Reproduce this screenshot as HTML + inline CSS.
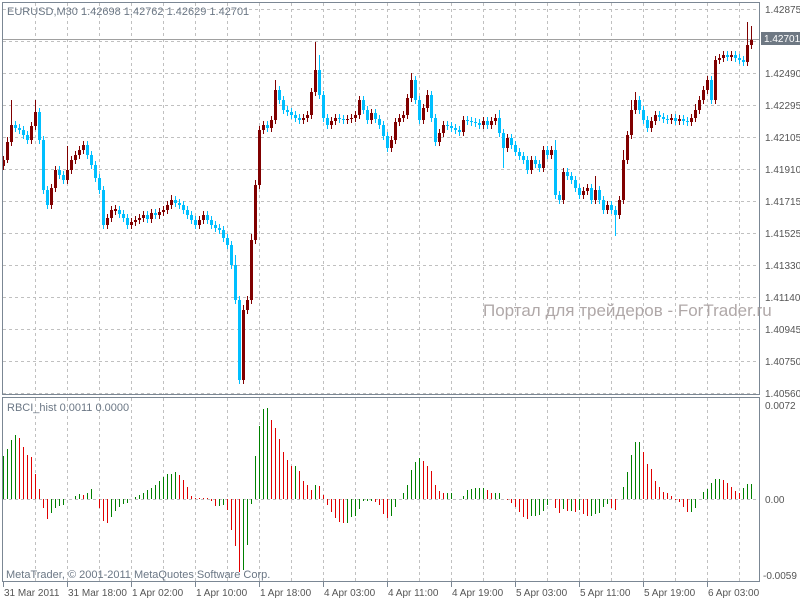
<!DOCTYPE html>
<html><head><meta charset="utf-8"><style>
html,body{margin:0;padding:0;background:#fff;width:800px;height:600px;overflow:hidden}
svg{display:block;font-family:"Liberation Sans",Tahoma,sans-serif;font-size:10px}
</style></head><body>
<svg width="800" height="600" xmlns="http://www.w3.org/2000/svg">
<g stroke="#c0c0c0" stroke-dasharray="3,3" stroke-width="1">
<path d="M35.5 3V394M67.5 3V394M99.5 3V394M131.5 3V394M163.5 3V394M195.5 3V394M227.5 3V394M259.5 3V394M291.5 3V394M323.5 3V394M355.5 3V394M387.5 3V394M419.5 3V394M451.5 3V394M483.5 3V394M515.5 3V394M547.5 3V394M579.5 3V394M611.5 3V394M643.5 3V394M675.5 3V394M707.5 3V394M739.5 3V394"/>
<path d="M35.5 398V581M67.5 398V581M99.5 398V581M131.5 398V581M163.5 398V581M195.5 398V581M227.5 398V581M259.5 398V581M291.5 398V581M323.5 398V581M355.5 398V581M387.5 398V581M419.5 398V581M451.5 398V581M483.5 398V581M515.5 398V581M547.5 398V581M579.5 398V581M611.5 398V581M643.5 398V581M675.5 398V581M707.5 398V581M739.5 398V581"/>
<path d="M3 9.5H759M3 41.5H759M3 73.5H759M3 105.5H759M3 137.5H759M3 169.5H759M3 201.5H759M3 233.5H759M3 265.5H759M3 297.5H759M3 329.5H759M3 361.5H759M3 393.5H759M3 499.5H759"/>
</g>
<line x1="2" y1="39.5" x2="760" y2="39.5" stroke="#a0a0a0"/>
<!-- wicks -->
<g stroke-width="1">
<path stroke="#800000" d="M3.5 156V170M7.5 137V163M11.5 100V146M31.5 122V144M35.5 100V130M51.5 184V209M55.5 166V192M67.5 146V184M71.5 156V174M75.5 151V164M79.5 146V159M83.5 141V154M107.5 214V229M111.5 206V222M115.5 205V215M131.5 218V229M135.5 216V226M139.5 214V224M143.5 211V222M151.5 209V223M159.5 208V219M163.5 206V216M167.5 201V214M171.5 195V209M199.5 216V229M203.5 211V224M243.5 305V384M247.5 296V314M251.5 234V304M255.5 180V244M259.5 126V189M263.5 121V134M271.5 116V132M275.5 80V124M303.5 114V124M307.5 111V122M311.5 88V119M315.5 42V96M331.5 117V129M335.5 114V125M347.5 115V124M351.5 114V123M355.5 111V122M359.5 96V119M371.5 109V124M391.5 136V152M395.5 118V144M399.5 114V126M403.5 111V122M407.5 94V119M411.5 73V102M423.5 104V124M427.5 90V112M439.5 129V146M443.5 121V137M463.5 116V136M483.5 117V129M491.5 117V129M495.5 114V125M507.5 134V152M531.5 156V174M543.5 146V172M551.5 146V159M563.5 168V204M583.5 187V199M587.5 184V195M595.5 176V204M607.5 201V214M619.5 196V219M623.5 150V204M627.5 131V164M631.5 100V139M635.5 92V114M651.5 117V132M655.5 111V125M671.5 114V124M679.5 115V125M691.5 114V126M695.5 104V122M699.5 96V114M703.5 86V104M707.5 76V94M715.5 56V104M719.5 54V64M723.5 51V62M731.5 51V61M747.5 22V66M751.5 26V49"/>
<path stroke="#00bfff" d="M15.5 121V132M19.5 124V134M23.5 126V139M27.5 131V144M39.5 108V144M43.5 136V194M47.5 186V209M59.5 166V179M63.5 171V184M87.5 141V159M91.5 151V169M95.5 161V182M99.5 174V194M103.5 186V229M119.5 206V218M123.5 210V222M127.5 214V229M147.5 211V223M155.5 209V219M175.5 196V207M179.5 199V209M183.5 201V214M187.5 206V219M191.5 211V224M195.5 216V229M207.5 211V224M211.5 216V229M215.5 221V232M219.5 224V234M223.5 226V242M227.5 234V249M231.5 241V269M235.5 255V304M239.5 296V384M267.5 121V132M279.5 86V104M283.5 96V114M287.5 106V116M291.5 108V119M295.5 111V122M299.5 114V124M319.5 55V99M323.5 91V122M327.5 114V129M339.5 114V123M343.5 115V124M363.5 96V114M367.5 106V124M375.5 109V123M379.5 115V129M383.5 121V140M387.5 132V152M415.5 76V104M419.5 96V124M431.5 91V122M435.5 114V146M447.5 121V130M451.5 122V132M455.5 124V134M459.5 126V136M467.5 116V125M471.5 117V126M475.5 118V127M479.5 119V129M487.5 117V129M499.5 110V137M503.5 129V168M511.5 134V149M515.5 141V156M519.5 148V160M523.5 152V164M527.5 156V174M535.5 156V168M539.5 160V172M547.5 146V159M555.5 140V199M559.5 191V204M567.5 168V180M571.5 172V184M575.5 176V192M579.5 184V199M591.5 184V204M599.5 186V204M603.5 196V214M611.5 201V214M615.5 206V236M639.5 96V114M643.5 106V124M647.5 116V132M659.5 111V121M663.5 113V123M667.5 115V124M675.5 114V125M683.5 115V125M687.5 117V126M711.5 76V104M727.5 51V61M735.5 51V62M739.5 54V64M743.5 56V66"/>
</g>
<!-- bodies -->
<g stroke-width="3">
<path stroke="#800000" d="M3.5 160V166M7.5 142V160M11.5 125V142M31.5 126V140M35.5 112V126M51.5 188V205M55.5 170V188M67.5 170V180M71.5 160V170M75.5 155V160M79.5 150V155M83.5 145V150M107.5 218V225M111.5 210V218M115.5 209V211M131.5 222V225M135.5 220V222M139.5 218V220M143.5 215V218M151.5 213V219M159.5 212V215M163.5 210V212M167.5 205V210M171.5 200V205M199.5 220V225M203.5 215V220M243.5 310V380M247.5 300V310M251.5 240V300M255.5 185V240M259.5 130V185M263.5 125V130M271.5 120V128M275.5 90V120M303.5 118V120M307.5 115V118M311.5 92V115M315.5 70V92M331.5 121V125M335.5 118V121M347.5 119V120M351.5 118V119M355.5 115V118M359.5 100V115M371.5 113V120M391.5 140V148M395.5 122V140M399.5 118V122M403.5 115V118M407.5 98V115M411.5 80V98M423.5 108V120M427.5 95V108M439.5 133V142M443.5 125V133M463.5 120V132M483.5 121V125M491.5 121V125M495.5 118V121M507.5 138V148M531.5 160V170M543.5 150V168M551.5 150V155M563.5 172V200M583.5 191V195M587.5 188V191M595.5 190V200M607.5 205V210M619.5 200V215M623.5 160V200M627.5 135V160M631.5 110V135M635.5 100V110M651.5 121V128M655.5 115V121M671.5 118V120M679.5 119V121M691.5 118V122M695.5 110V118M699.5 100V110M703.5 90V100M707.5 80V90M715.5 60V100M719.5 58V60M723.5 55V58M731.5 55V57M747.5 45V62M751.5 40V45"/>
<path stroke="#00bfff" d="M15.5 125V128M19.5 128V130M23.5 130V135M27.5 135V140M39.5 112V140M43.5 140V190M47.5 190V205M59.5 170V175M63.5 175V180M87.5 145V155M91.5 155V165M95.5 165V178M99.5 178V190M103.5 190V225M119.5 210V214M123.5 214V218M127.5 218V225M147.5 215V219M155.5 213V215M175.5 200V203M179.5 203V205M183.5 205V210M187.5 210V215M191.5 215V220M195.5 220V225M207.5 215V220M211.5 220V225M215.5 225V228M219.5 228V230M223.5 230V238M227.5 238V245M231.5 245V265M235.5 265V300M239.5 300V380M267.5 125V128M279.5 90V100M283.5 100V110M287.5 110V112M291.5 112V115M295.5 115V118M299.5 118V120M319.5 70V95M323.5 95V118M327.5 118V125M339.5 118V119M343.5 119V120M363.5 100V110M367.5 110V120M375.5 113V119M379.5 119V125M383.5 125V136M387.5 136V148M415.5 80V100M419.5 100V120M431.5 95V118M435.5 118V142M447.5 125V126M451.5 126V128M455.5 128V130M459.5 130V132M467.5 120V121M471.5 121V122M475.5 122V123M479.5 123V125M487.5 121V125M499.5 118V133M503.5 133V148M511.5 138V145M515.5 145V152M519.5 152V156M523.5 156V160M527.5 160V170M535.5 160V164M539.5 164V168M547.5 150V155M555.5 150V195M559.5 195V200M567.5 172V176M571.5 176V180M575.5 180V188M579.5 188V195M591.5 188V200M599.5 190V200M603.5 200V210M611.5 205V210M615.5 210V215M639.5 100V110M643.5 110V120M647.5 120V128M659.5 115V117M663.5 117V119M667.5 119V120M675.5 118V121M683.5 119V121M687.5 121V122M711.5 80V100M727.5 55V57M735.5 55V58M739.5 58V60M743.5 60V62"/>
</g>
<!-- histogram -->
<g stroke-width="1">
<path stroke="#008000" d="M3.5 456V499M7.5 449V499M11.5 440V499M15.5 435V499M51.5 499V513M55.5 499V508M59.5 499V506M63.5 499V505M75.5 496V499M79.5 494V499M87.5 493V499M91.5 489V499M111.5 499V517M115.5 499V511M119.5 499V507M123.5 499V504M127.5 499V503M135.5 497V499M139.5 495V499M143.5 493V499M147.5 490V499M151.5 488V499M155.5 485V499M159.5 481V499M163.5 477V499M167.5 474V499M171.5 474V499M175.5 472V499M219.5 499V506M223.5 499V505M243.5 499V570M247.5 499V545M251.5 499V504M255.5 456V499M259.5 426V499M263.5 409V499M267.5 408V499M295.5 466V499M315.5 485V499M347.5 499V523M351.5 499V517M355.5 499V516M359.5 499V509M363.5 499V501M367.5 499V501M371.5 499V501M391.5 499V516M395.5 499V507M403.5 493V499M407.5 485V499M411.5 470V499M415.5 462V499M419.5 458V499M447.5 493V499M451.5 493V499M463.5 496V499M467.5 490V499M471.5 489V499M475.5 488V499M479.5 488V499M483.5 488V499M495.5 493V499M499.5 493V499M531.5 499V516M535.5 499V516M539.5 499V515M543.5 499V511M547.5 499V505M563.5 499V509M571.5 499V511M579.5 499V510M591.5 499V516M595.5 499V514M599.5 499V513M603.5 499V507M607.5 499V504M623.5 487V499M627.5 472V499M631.5 455V499M635.5 442V499M639.5 442V499M691.5 499V512M695.5 499V508M703.5 492V499M707.5 489V499M711.5 483V499M715.5 479V499M719.5 479V499M743.5 488V499M747.5 484V499M751.5 484V499"/>
<path stroke="#e00000" d="M19.5 438V499M23.5 447V499M27.5 455V499M31.5 457V499M35.5 474V499M39.5 489V499M43.5 499V508M47.5 499V519M83.5 495V499M99.5 499V508M103.5 499V521M107.5 499V523M179.5 475V499M183.5 480V499M187.5 487V499M191.5 496V499M195.5 498V499M199.5 498V499M203.5 498V499M207.5 498V499M211.5 499V501M215.5 499V506M227.5 499V510M231.5 499V530M235.5 499V546M239.5 499V572M271.5 420V499M275.5 428V499M279.5 439V499M283.5 452V499M287.5 460V499M291.5 466V499M299.5 471V499M303.5 481V499M307.5 485V499M311.5 490V499M319.5 486V499M323.5 495V499M327.5 499V505M331.5 499V512M335.5 499V518M339.5 499V522M343.5 499V523M375.5 499V502M379.5 499V505M383.5 499V514M387.5 499V518M423.5 461V499M427.5 466V499M431.5 471V499M435.5 485V499M439.5 491V499M443.5 493V499M487.5 490V499M491.5 493V499M507.5 499V500M511.5 499V503M515.5 499V507M519.5 499V512M523.5 499V517M527.5 499V519M555.5 499V508M559.5 499V513M567.5 499V511M575.5 499V512M583.5 499V514M587.5 499V516M611.5 499V508M615.5 499V510M643.5 452V499M647.5 464V499M651.5 469V499M655.5 481V499M659.5 487V499M663.5 492V499M667.5 493V499M671.5 496V499M675.5 499V500M679.5 499V502M683.5 499V507M687.5 499V512M723.5 480V499M727.5 483V499M731.5 487V499M735.5 491V499M739.5 493V499"/>
</g>
<rect x="2.5" y="2.5" width="757" height="392" fill="none" stroke="#7b8794"/>
<rect x="2.5" y="397.5" width="757" height="184" fill="none" stroke="#7b8794"/>
<text x="7" y="15" fill="#6b7785" font-size="11">EURUSD,M30  1.42698 1.42762 1.42629 1.42701</text>
<text x="7" y="411" fill="#6b7785" font-size="11">RBCI_hist 0.0011 0.0000</text>
<text x="6" y="578" fill="#6b7785" font-size="11">MetaTrader, © 2001-2011 MetaQuotes Software Corp.</text>
<text x="483" y="316" fill="#b0a8a8" font-size="17">Портал для трейдеров - ForTrader.ru</text>
<g fill="#555">
<text x="765" y="13">1.42875</text>
<text x="765" y="77">1.42490</text>
<text x="765" y="109">1.42295</text>
<text x="765" y="141">1.42105</text>
<text x="765" y="173">1.41910</text>
<text x="765" y="205">1.41715</text>
<text x="765" y="237">1.41525</text>
<text x="765" y="269">1.41330</text>
<text x="765" y="301">1.41140</text>
<text x="765" y="333">1.40945</text>
<text x="765" y="365">1.40750</text>
<text x="765" y="397">1.40560</text>
<text x="765" y="409">0.0072</text>
<text x="765" y="503">0.00</text>
<text x="763" y="579">-0.0059</text>
</g>
<rect x="761" y="32" width="39" height="13" fill="#6e7883"/>
<text x="764" y="42" fill="#fff">1.42701</text>
<path stroke="#7b8794" d="M3.5 582V587M67.5 582V587M131.5 582V587M195.5 582V587M259.5 582V587M323.5 582V587M387.5 582V587M451.5 582V587M515.5 582V587M579.5 582V587M643.5 582V587M707.5 582V587"/>
<g fill="#555">
<text x="4" y="596">31 Mar 2011</text>
<text x="68" y="596">31 Mar 18:00</text>
<text x="132" y="596">1 Apr 02:00</text>
<text x="196" y="596">1 Apr 10:00</text>
<text x="260" y="596">1 Apr 18:00</text>
<text x="324" y="596">4 Apr 03:00</text>
<text x="388" y="596">4 Apr 11:00</text>
<text x="452" y="596">4 Apr 19:00</text>
<text x="516" y="596">5 Apr 03:00</text>
<text x="580" y="596">5 Apr 11:00</text>
<text x="644" y="596">5 Apr 19:00</text>
<text x="708" y="596">6 Apr 03:00</text>
</g>
</svg>
</body></html>
